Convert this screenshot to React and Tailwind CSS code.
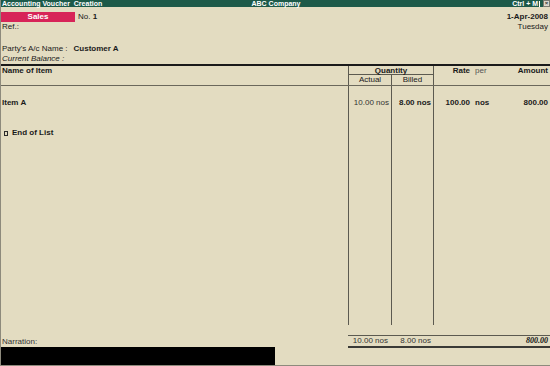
export default function App() {
  return (
    <div className="w-[550px] h-[366px] bg-[#e3dcc1] border-l border-b border-[#8d8a7c] flex flex-col overflow-hidden text-[8px] leading-[10px] text-[#1a1a1a] font-['Liberation_Sans',Arial,sans-serif]">
      {/* Title bar */}
      <div className="h-[7px] bg-[#1d5a49] flex items-center text-white font-bold text-[7px] leading-[7px]">
        <div className="flex-1 pl-[1px] whitespace-pre">Accounting Voucher  Creation</div>
        <div>ABC Company</div>
        <div className="flex-1 flex justify-end items-center">
          <span>Ctrl + M</span>
          <span className="ml-[1px] w-[1px] h-[6px] bg-white"></span>
          <span className="ml-[3px] w-[7px] h-[7px] bg-[#dcd8cc] border border-[#7a7a70] text-[#333] text-[6px] leading-[5px] flex items-center justify-center">×</span>
        </div>
      </div>

      {/* Voucher header */}
      <div className="mt-[5px] h-[10px] flex items-center">
        <div className="w-[74px] h-[10px] bg-[#d72458] text-white font-bold text-center">Sales</div>
        <div className="ml-[3px]">No. <span className="font-bold">1</span></div>
        <div className="flex-1 text-right pr-[2px] font-bold">1-Apr-2008</div>
      </div>
      <div className="h-[10px] flex">
        <div className="pl-[1px]">Ref.:</div>
        <div className="flex-1 text-right pr-[2px]">Tuesday</div>
      </div>
      <div className="mt-[12px] h-[10px] flex pl-[1px]">
        <span>Party&apos;s A/c Name :</span>
        <span className="ml-[6px] font-bold">Customer A</span>
      </div>
      <div className="h-[10px] pl-[1px] italic">Current Balance :</div>
      <div className="h-[2px] bg-[#1a1a1a]"></div>

      {/* Table header */}
      <div className="h-[20px] flex border-b border-[#6b685c]">
        <div className="w-[347px] pl-[1px] font-bold">Name of Item</div>
        <div className="w-[85px] border-l border-[#5c5a50] flex flex-col">
          <div className="h-[9px] leading-[10px] border-b border-[#5c5a50] text-center font-bold">Quantity</div>
          <div className="flex-1 flex">
            <div className="w-[42px] text-center leading-[9px]">Actual</div>
            <div className="flex-1 border-l border-[#5c5a50] text-center leading-[9px]">Billed</div>
          </div>
        </div>
        <div className="flex-1 border-l border-[#5c5a50] flex">
          <div className="w-[36px] text-right font-bold">Rate</div>
          <div className="pl-[5px] text-[#555]">per</div>
          <div className="flex-1 text-right pr-[2px] font-bold">Amount</div>
        </div>
      </div>

      {/* Table body */}
      <div className="flex-1 flex">
        <div className="w-[347px] flex flex-col pl-[1px] font-bold">
          <div className="mt-[12px] h-[10px]">Item A</div>
          <div className="mt-[20px] h-[10px] flex items-center">
            <span className="ml-[2px] w-[4px] h-[5px] border border-[#2a2a2a]"></span>
            <span className="ml-[4px]">End of List</span>
          </div>
        </div>
        <div className="w-[43px] border-l border-[#5c5a50] flex flex-col">
          <div className="mt-[12px] h-[10px] text-right pr-[2px] text-[#333]">10.00 nos</div>
        </div>
        <div className="w-[42px] border-l border-[#5c5a50] flex flex-col">
          <div className="mt-[12px] h-[10px] text-right pr-[2px] font-bold">8.00 nos</div>
        </div>
        <div className="flex-1 border-l border-[#5c5a50] flex flex-col">
          <div className="mt-[12px] h-[10px] flex font-bold">
            <div className="w-[36px] text-right">100.00</div>
            <div className="pl-[5px]">nos</div>
            <div className="flex-1 text-right pr-[2px]">800.00</div>
          </div>
        </div>
      </div>

      {/* Footer */}
      <div className="h-[40px] flex">
        <div className="w-[347px] flex flex-col justify-end">
          <div className="h-[10px] pl-[1px] text-[#333]">Narration:</div>
          <div className="w-[274px] h-[18px] bg-black"></div>
        </div>
        <div className="flex-1 flex flex-col pt-[10px]">
          <div className="h-[13px] border-t border-b-2 border-t-[#5c5a50] border-b-[#3a3a36] flex text-[#333]">
            <div className="w-[43px] text-right pr-[3px]">10.00 nos</div>
            <div className="w-[42px] text-right pr-[2px]">8.00 nos</div>
            <div className="flex-1 text-right pr-[2px] font-bold italic font-['Liberation_Serif',serif] text-[#111]">800.00</div>
          </div>
        </div>
      </div>
    </div>
  );
}
